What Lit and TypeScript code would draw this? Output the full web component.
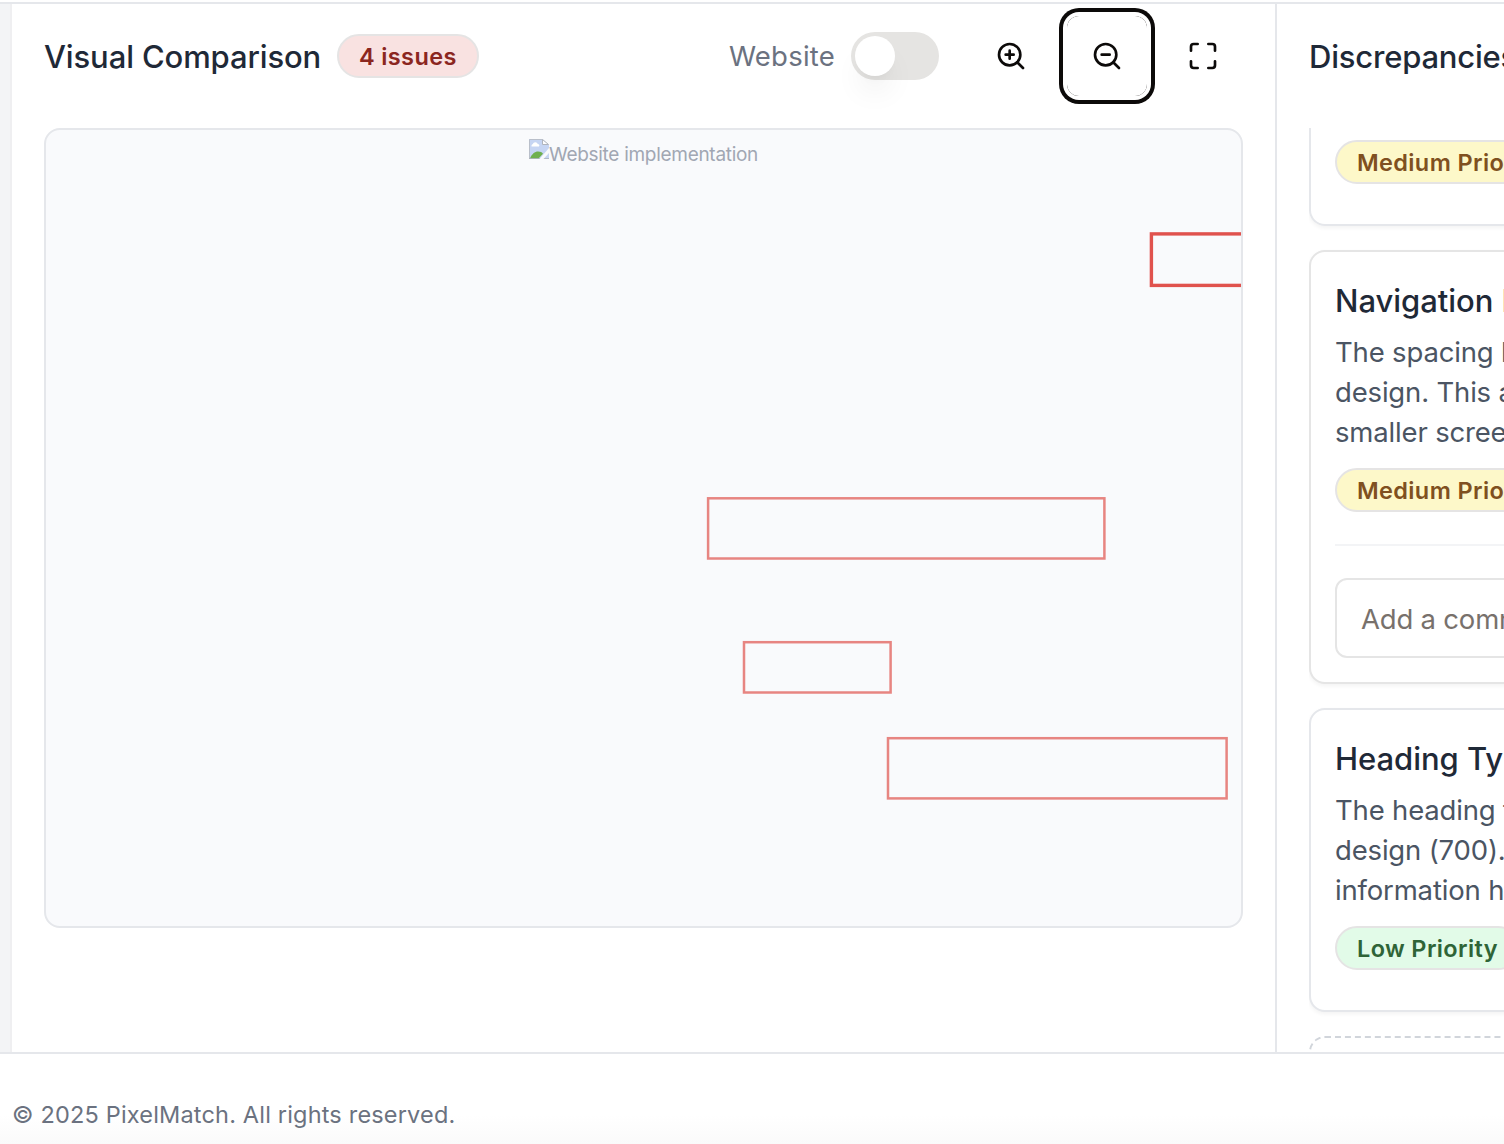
import { LitElement, html, css, svg, nothing } from "lit";
import { customElement, property, state } from "lit/decorators.js";

interface Region {
  x1: number;
  y1: number;
  x2: number;
  y2: number;
  active?: boolean;
}

interface Issue {
  title: string;
  lines: string[];
  level: "medium" | "low";
  label: string;
  comment?: boolean;
}

// Centre lines of each marker's border, in canvas coordinates.
const REGIONS: Region[] = [
  { x1: 1105.4, y1: 103.9, x2: 1284, y2: 155.4, active: true },
  { x1: 662.1, y1: 368.3, x2: 1058.4, y2: 428.5 },
  { x1: 698, y1: 512.2, x2: 844.6, y2: 562.5 },
  { x1: 842, y1: 608.2, x2: 1180.6, y2: 668.4 },
];

const ISSUES: Issue[] = [
  {
    title: "Navigation Menu",
    lines: ["The spacing between", "design. This affects", "smaller screens."],
    level: "medium",
    label: "Medium Priority",
    comment: true,
  },
  {
    title: "Heading Typography",
    lines: ["The heading font", "design (700). This", "information hierarchy."],
    level: "low",
    label: "Low Priority",
  },
];

const ICONS = {
  zoomIn: svg`<circle cx="11" cy="11" r="8"/><path d="m21 21-4.35-4.35M11 8v6M8 11h6"/>`,
  zoomOut: svg`<circle cx="11" cy="11" r="8"/><path d="m21 21-4.35-4.35M8 11h6"/>`,
  maximize: svg`<path d="M8 3H5a2 2 0 0 0-2 2v3M21 8V5a2 2 0 0 0-2-2h-3M3 16v3a2 2 0 0 0 2 2h3M16 21h3a2 2 0 0 0 2-2v-3"/>`,
};

const badgeStyles = css`
  .badge {
    display: inline-flex;
    align-items: center;
    box-sizing: border-box;
    height: 44px;
    padding: 1px 20px 0;
    border: 2px solid #e5e4e4;
    border-radius: 22px;
    font-size: 23.5px;
    font-weight: 600;
    letter-spacing: 0.37px;
    white-space: nowrap;
  }
  .badge.high {
    background: #f9e2e1;
    color: #8b2620;
  }
  .badge.medium {
    background: #fdf8c9;
    color: #7f5020;
  }
  .badge.low {
    background: #e2fbe8;
    color: #2f6437;
  }
`;

@customElement("icon-button")
export class IconButton extends LitElement {
  @property() icon: keyof typeof ICONS = "zoomIn";
  @property({ type: Boolean }) ring = false;

  static styles = css`
    :host {
      display: block;
    }
    button {
      display: flex;
      align-items: center;
      justify-content: center;
      width: 80px;
      height: 80px;
      padding: 0;
      border: 0;
      border-radius: 12px;
      background: transparent;
      color: #0c0a09;
    }
    .ring {
      box-shadow: 0 0 0 4px #fff, 0 0 0 8px #0c0a09;
    }
    svg {
      width: 32px;
      height: 32px;
      fill: none;
      stroke: currentColor;
      stroke-width: 2;
      stroke-linecap: round;
      stroke-linejoin: round;
    }
  `;

  render() {
    return html`<button class=${this.ring ? "ring" : ""}>
      <svg viewBox="0 0 24 24">${ICONS[this.icon]}</svg>
    </button>`;
  }
}

@customElement("issue-card")
export class IssueCard extends LitElement {
  @property({ attribute: false }) issue?: Issue;

  static styles = [
    badgeStyles,
    css`
      :host {
        display: block;
      }
      .card {
        display: flex;
        flex-direction: column;
        align-items: flex-start;
        box-sizing: border-box;
        width: 640px;
        padding: 24px 24px 40px;
        border: 2px solid #e5e7eb;
        border-radius: 16px;
        background: #fff;
        box-shadow: 0 2px 4px rgba(0, 0, 0, 0.05);
      }
      .card.open {
        padding-bottom: 24px;
        border-color: #e5e5e5;
      }
      h3 {
        margin: 0 0 8px;
        padding-top: 1px;
        height: 47px;
        font-size: 31px;
        font-weight: 500;
        line-height: 48px;
        letter-spacing: -0.05px;
        color: #1f2937;
      }
      p {
        margin: 0 0 16px;
        font-size: 27.5px;
        line-height: 40px;
        letter-spacing: -0.17px;
        color: #4b5563;
        white-space: nowrap;
      }
      .line {
        display: block;
      }
      .comment {
        align-self: stretch;
        margin-top: 32px;
        padding-top: 32px;
        border-top: 2px solid #f3f4f6;
      }
      .input {
        display: flex;
        align-items: center;
        box-sizing: border-box;
        height: 80px;
        padding: 2px 24px 0;
        border: 2px solid #e5e5e5;
        border-radius: 12px;
        font-size: 27.5px;
        letter-spacing: -0.2px;
        color: #78716c;
      }
    `,
  ];

  render() {
    const issue = this.issue;
    if (!issue) return nothing;
    return html`<article class="card ${issue.comment ? "open" : ""}">
      <h3>${issue.title}</h3>
      <p>${issue.lines.map((l) => html`<span class="line">${l}</span>`)}</p>
      <span class="badge ${issue.level}">${issue.label}</span>
      ${issue.comment
        ? html`<div class="comment"><div class="input">Add a comment...</div></div>`
        : nothing}
    </article>`;
  }
}

@customElement("app-root")
export class AppRoot extends LitElement {
  @state() private regions = REGIONS;

  static styles = [
    badgeStyles,
    css`
      :host {
        display: flex;
        flex-direction: column;
        box-sizing: border-box;
        width: 1504px;
        height: 1144px;
        padding-top: 2px;
        overflow: hidden;
        background: #fff;
        font-family: Inter, "Liberation Sans", sans-serif;
        color: #1f2937;
      }
      .workspace {
        display: flex;
        height: 1048px;
        border-top: 2px solid #e5e7eb;
        border-bottom: 2px solid #e5e7eb;
      }
      .gutter {
        box-sizing: border-box;
        width: 12px;
        background: #f3f4f6;
        border-right: 2px solid #efeff1;
      }
      .main {
        display: flex;
        flex-direction: column;
        gap: 32px;
        width: 1199px;
        padding: 12px 32px;
      }
      .toolbar {
        display: flex;
        align-items: center;
        height: 80px;
      }
      h2 {
        margin: 0;
        padding-top: 1px;
        font-size: 31px;
        font-weight: 500;
        line-height: 48px;
        letter-spacing: -0.12px;
        white-space: nowrap;
      }
      .toolbar .badge {
        margin-left: 16px;
      }
      .heading {
        width: 277px;
      }
      .controls {
        display: flex;
        align-items: center;
        margin-left: auto;
      }
      .label {
        margin-right: 16px;
        font-size: 27.5px;
        letter-spacing: 0.22px;
        color: #6b7280;
      }
      .switch {
        box-sizing: border-box;
        width: 88px;
        height: 48px;
        margin-right: 32px;
        padding: 4px;
        border-radius: 24px;
        background: #e5e4e2;
      }
      .thumb {
        width: 40px;
        height: 40px;
        border-radius: 50%;
        background: #fff;
        box-shadow: 0 20px 30px -6px rgba(0, 0, 0, 0.08), 0 8px 12px -8px rgba(0, 0, 0, 0.07);
      }
      .buttons {
        display: flex;
        gap: 16px;
      }
      .canvas {
        position: relative;
        box-sizing: border-box;
        width: 1199px;
        height: 800px;
        padding-top: 9px;
        border: 2px solid #e5e7eb;
        border-radius: 16px;
        background: #f9fafc;
        overflow: hidden;
      }
      .missing {
        display: flex;
        justify-content: center;
        height: 31px;
        color: #a1a7b3;
        font-size: 19px;
        line-height: 31px;
        letter-spacing: -0.29px;
      }
      .missing svg {
        width: 20px;
        height: 20px;
      }
      .regions {
        position: absolute;
        inset: 0;
        width: 1195px;
        height: 796px;
      }
      .region {
        fill: none;
        stroke: #e0524d;
        stroke-width: 2.5px;
        opacity: 0.7;
      }
      .region.active {
        stroke-width: 3.4px;
        opacity: 1;
      }
      .side {
        display: flex;
        flex-direction: column;
        gap: 32px;
        width: 195px;
        padding: 12px 0 0 32px;
        border-left: 2px solid #e5e7eb;
        overflow: hidden;
      }
      .side-head {
        display: flex;
        align-items: center;
        flex: none;
        height: 80px;
      }
      .side-head h2 {
        letter-spacing: -0.2px;
      }
      .list {
        display: flex;
        flex-direction: column;
        gap: 24px;
        flex: 1;
        min-height: 0;
        overflow: hidden;
      }
      .partial {
        flex: none;
        box-sizing: border-box;
        width: 640px;
        height: 98px;
        padding: 12px 24px;
        border: solid #e5e7eb;
        border-width: 0 2px 2px;
        border-radius: 0 0 16px 16px;
        box-shadow: 0 2px 4px rgba(0, 0, 0, 0.05);
      }
      issue-card {
        flex: none;
      }
      .empty {
        flex: none;
        box-sizing: border-box;
        width: 640px;
        height: 120px;
        border: 2px dashed #d1d5db;
        border-radius: 16px;
      }
      .footer {
        box-sizing: border-box;
        height: 90px;
        padding: 45px 12px 0;
        background: linear-gradient(#fff 68%, #fafafa);
        font-size: 23.5px;
        line-height: 32px;
        letter-spacing: 0.18px;
        color: #6b7280;
      }
    `,
  ];

  private brokenImage() {
    return html`<svg viewBox="0 0 20 20">
      <path d="M0 0H13.5L20 6V20H0Z" fill="#c6d5f3" />
      <path d="M.5 20V.5H13.5" fill="none" stroke="#b9bfca" />
      <path d="M13.5 .5L19.5 5.5H13.5Z" fill="#fdfdfe" stroke="#b0b4bc" stroke-width="1" />
      <path d="M2.5 7.5a2 2 0 0 1 1.3-2.4 2.7 2.7 0 0 1 5-.2 1.6 1.6 0 0 1 1.2 2.6Z" fill="#fff" />
      <path d="M1 19.5C2.5 15 6 12.4 9 12.4c2.5 0 4 .9 5 2.3L9.5 19.5Z" fill="#6fb04f" />
      <path d="M0 19.6H20" stroke="#a9adb5" stroke-width=".8" />
      <path d="M20 9L10.500 20H14.500L20 14Z" fill="#f9fafc" />
    </svg>`;
  }

  render() {
    return html`
      <div class="workspace">
        <div class="gutter"></div>
        <main class="main">
          <div class="toolbar">
            <h2 class="heading">Visual Comparison</h2>
            <span class="badge high">4 issues</span>
            <div class="controls">
              <span class="label">Website</span>
              <div class="switch"><div class="thumb"></div></div>
              <div class="buttons">
                <icon-button icon="zoomIn"></icon-button>
                <icon-button icon="zoomOut" ring></icon-button>
                <icon-button icon="maximize"></icon-button>
              </div>
            </div>
          </div>
          <div class="canvas">
            <div class="missing">${this.brokenImage()}<span>Website implementation</span></div>
            <svg class="regions" viewBox="0 0 1195 796">
              ${this.regions.map(
                (r) => svg`<rect class="region ${r.active ? "active" : ""}"
                  x=${r.x1} y=${r.y1} width=${r.x2 - r.x1} height=${r.y2 - r.y1} />`
              )}
            </svg>
          </div>
        </main>
        <aside class="side">
          <div class="side-head"><h2>Discrepancies</h2></div>
          <div class="list">
            <div class="partial"><span class="badge medium">Medium Priority</span></div>
            ${ISSUES.map((i) => html`<issue-card .issue=${i}></issue-card>`)}
            <div class="empty"></div>
          </div>
        </aside>
      </div>
      <footer class="footer">© 2025 PixelMatch. All rights reserved.</footer>
    `;
  }
}
